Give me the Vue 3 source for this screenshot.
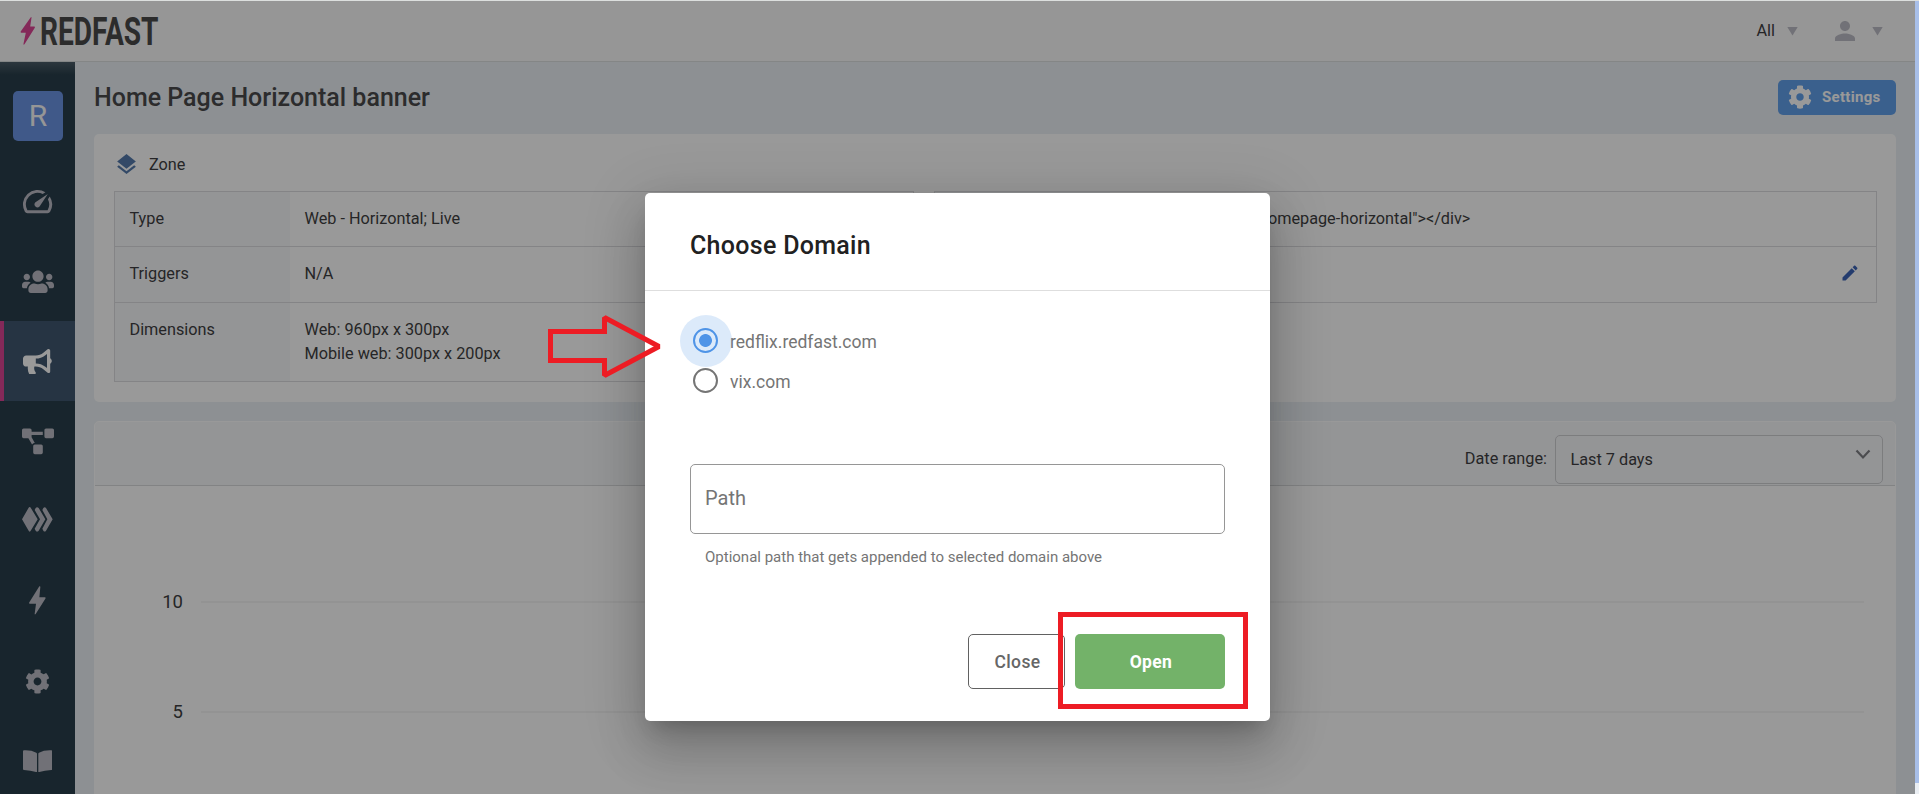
<script setup>
// App.vue — zone detail page with the "Choose Domain" dialog open.

import { ref } from "vue";

const COG =
  "M487.4 315.7l-42.6-24.6c4.3-23.2 4.3-47 0-70.2l42.6-24.6c4.9-2.8 7.1-8.6 5.5-14-11.1-35.6-30-67.8-54.7-94.6-3.8-4.1-10-5.1-14.8-2.3L380.8 110c-17.9-15.4-38.5-27.3-60.8-35.1V25.8c0-5.6-3.9-10.5-9.4-11.7-36.7-8.2-74.3-7.8-109.2 0-5.5 1.2-9.4 6.1-9.4 11.7V75c-22.2 7.9-42.8 19.8-60.8 35.1L88.7 85.5c-4.9-2.8-11-1.9-14.8 2.3-24.7 26.7-43.6 58.9-54.7 94.6-1.7 5.4.6 11.2 5.5 14L67.3 221c-4.3 23.2-4.3 47 0 70.2l-42.6 24.6c-4.9 2.8-7.1 8.6-5.5 14 11.1 35.6 30 67.8 54.7 94.6 3.8 4.1 10 5.1 14.8 2.3l42.6-24.6c17.9 15.4 38.5 27.3 60.8 35.1v49.2c0 5.6 3.9 10.5 9.4 11.7 36.7 8.2 74.3 7.8 109.2 0 5.5-1.2 9.4-6.1 9.4-11.7v-49.2c22.2-7.9 42.8-19.8 60.8-35.1l42.6 24.6c4.9 2.8 11 1.9 14.8-2.3 24.7-26.7 43.6-58.9 54.7-94.6 1.5-5.5-.7-11.3-5.6-14.1zM256 336c-44.1 0-80-35.9-80-80s35.9-80 80-80 80 35.9 80 80-35.9 80-80 80z";

const navItems = [
  {
    key: "dashboard",
    viewBox: "0 0 24 24",
    width: 35,
    height: 35,
    path: "M20.38 8.57l-1.23 1.85a8 8 0 0 1-.22 7.58H5.07A8 8 0 0 1 15.58 6.85l1.85-1.23A10 10 0 0 0 3.35 19a2 2 0 0 0 1.72 1h13.85a2 2 0 0 0 1.74-1 10 10 0 0 0-.27-10.44zM10.59 15.41a2 2 0 0 0 2.83 0l5.66-8.49-8.49 5.66a2 2 0 0 0 0 2.83z",
  },
  {
    key: "audience",
    viewBox: "0 -20 640 512",
    width: 32,
    height: 25.6,
    path: "M96 224c35.3 0 64-28.7 64-64s-28.7-64-64-64-64 28.7-64 64 28.7 64 64 64zm448 0c35.3 0 64-28.7 64-64s-28.7-64-64-64-64 28.7-64 64 28.7 64 64 64zm32 32h-64c-17.6 0-33.5 7.1-45.1 18.6 40.3 22.1 68.9 62 75.1 109.4h66c17.7 0 32-14.3 32-32v-32c0-35.3-28.7-64-64-64zm-256 0c61.9 0 112-50.1 112-112S381.9 32 320 32 208 82.1 208 144s50.1 112 112 112zm76.8 32h-8.3c-20.8 10-43.9 16-68.5 16s-47.6-6-68.5-16h-8.3C179.6 288 128 339.6 128 403.2V432c0 26.5 21.5 48 48 48h288c26.5 0 48-21.5 48-48v-28.8c0-63.6-51.6-115.2-115.2-115.2zm-223.7-13.4C161.5 263.1 145.6 256 128 256H64c-35.3 0-64 28.7-64 64v32c0 17.7 14.3 32 32 32h65.9c6.3-47.4 34.9-87.3 75.2-109.4z",
  },
  {
    key: "prompts",
    active: true,
    viewBox: "0 -20 576 532",
    width: 28.8,
    height: 26.6,
    path: "M576 240c0-23.63-12.95-44.04-32-55.12V32.01C544 23.26 537.02 0 512 0c-7.12 0-14.19 2.38-19.98 7.02l-85.03 68.03C364.28 109.19 310.66 128 256 128H64c-35.35 0-64 28.65-64 64v96c0 35.35 28.65 64 64 64h33.7c-1.39 10.48-2.18 21.14-2.18 32 0 39.77 9.26 77.35 25.56 110.94 5.19 10.69 16.52 17.06 28.4 17.06h74.28c26.05 0 41.69-29.84 25.9-50.56-16.4-21.52-26.15-48.36-26.15-77.44 0-11.11 1.62-21.79 4.41-32H256c54.66 0 108.28 18.81 150.98 52.95l85.03 68.03a32.023 32.023 0 0 0 19.98 7.02c24.92 0 32-22.78 32-32V295.13C563.05 284.04 576 263.63 576 240zm-96 141.42l-33.05-26.44C392.95 311.78 325.12 288 256 288v-96c69.12 0 136.95-23.78 190.95-66.98L480 98.58v282.84z",
  },
  {
    key: "flows",
    viewBox: "0 -32 640 544",
    width: 32,
    height: 27.2,
    path: "M384 320H256c-17.67 0-32 14.33-32 32v128c0 17.67 14.33 32 32 32h128c17.67 0 32-14.33 32-32V352c0-17.67-14.33-32-32-32zM192 32c0-17.67-14.33-32-32-32H32C14.33 0 0 14.33 0 32v128c0 17.67 14.33 32 32 32h95.72l73.16 128.04C211.98 300.98 232.4 288 256 288h.28L192 175.51V128h224V64H192V32zM608 0H480c-17.67 0-32 14.33-32 32v128c0 17.67 14.33 32 32 32h128c17.67 0 32-14.33 32-32V32c0-17.67-14.33-32-32-32z",
  },
  {
    key: "journeys",
    viewBox: "0 0 92 84",
    width: 30.7,
    height: 28,
    path: "M23 0q2 0 4 4l20 33-20 33q-2 4-4 4t-4-4L0 37 19 4q2-4 4-4zM38 9l3-6q4-5 9 0l20 34-20 34q-5 5-9 0l-3-6 16-28zM61 9l3-6q4-5 8 0l20 34-20 34q-4 5-8 0l-3-6 15-28z",
  },
  {
    key: "triggers",
    viewBox: "0 0 50 90",
    width: 16.7,
    height: 30,
    path: "M31 1q3-1 3 2l-3 31h17q3 1 1 4L20 84q-3 3-3-1l4-30H2q-3-1-1-4z",
  },
  { key: "settings", viewBox: "0 0 512 512", width: 25, height: 25, path: COG },
  {
    key: "docs",
    viewBox: "0 0 88 68",
    width: 29.3,
    height: 22.7,
    path: "M3 1q22-1 37 7 2 1 2 3v56q-17-6-39-7-3 0-3-3V4q0-3 3-3zM85 1q-22-1-37 7-2 1-2 3v56q17-6 39-7 3 0 3-3V4q0-3-3-3z",
  },
];

const zoneRows = [
  { label: "Type", lines: ["Web - Horizontal; Live"] },
  { label: "Triggers", lines: ["N/A"] },
  { label: "Dimensions", lines: ["Web: 960px x 300px", "Mobile web: 300px x 200px"] },
];

const tagRows = [
  { label: "Tag", text: '<div data-zone-id="homepage-horizontal"></div>' },
  { label: "Notes", text: "", editable: true },
];

const ticks = [10, 5];

const domains = ["redflix.redfast.com", "vix.com"];
const selected = ref(domains[0]);
</script>

<template>
  <div class="app">
    <header class="topbar">
      <svg class="logo" width="220" height="60" viewBox="0 -15 220 60">
        <path d="M10.6 1.4q1-1 .9.4L10.2 10.5h4.2q1 .2.4 1.2L4.5 28.3q-1.2 1-1-.6l2.3-10.9H1.2q-1-.2-.5-1.2z" fill="#dd4594" />
        <text x="20" y="29" textLength="118.5" lengthAdjust="spacingAndGlyphs">REDFAST</text>
      </svg>
      <div class="topbar-right">
        <span class="account">All</span>
        <span class="caret" />
        <svg class="user" width="30" height="30" viewBox="0 0 24 24">
          <path d="M12 12c2.21 0 4-1.79 4-4s-1.79-4-4-4-4 1.79-4 4 1.79 4 4 4zm0 2c-2.67 0-8 1.34-8 4v2h16v-2c0-2.66-5.33-4-8-4z" />
        </svg>
        <span class="caret" />
      </div>
    </header>

    <div class="body">
      <nav class="sidebar">
        <div class="tile">R</div>
        <a v-for="item in navItems" :key="item.key" class="nav-item" :class="{ active: item.active }">
          <svg :width="item.width" :height="item.height" :viewBox="item.viewBox">
            <path :d="item.path" />
          </svg>
        </a>
      </nav>

      <main class="main">
        <div class="title-row">
          <h1>Home Page Horizontal banner</h1>
          <button class="settings">
            <svg width="24" height="24" viewBox="0 0 512 512"><path :d="COG" /></svg>
            <span>Settings</span>
          </button>
        </div>

        <section class="card zone">
          <div class="zone-head">
            <svg width="25" height="25" viewBox="0 0 24 24">
              <path d="M11.99 18.54l-7.37-5.73L3 14.07l9 7 9-7-1.63-1.27-7.38 5.74zM12 16l7.36-5.73L21 9l-9-7-9 7 1.63 1.27L12 16z" />
            </svg>
            <span>Zone</span>
          </div>
          <div class="tables">
            <div class="table left">
              <div v-for="row in zoneRows" :key="row.label" class="row">
                <div class="label">{{ row.label }}</div>
                <div class="value">
                  <div v-for="line in row.lines" :key="line">{{ line }}</div>
                </div>
              </div>
            </div>
            <div class="table right">
              <div v-for="row in tagRows" :key="row.label" class="row">
                <div class="label">{{ row.label }}</div>
                <div class="value">{{ row.text }}</div>
                <svg v-if="row.editable" class="edit" width="20" height="20" viewBox="0 0 24 24">
                  <path d="M3 17.25V21h3.75L17.81 9.94l-3.75-3.75L3 17.25zM20.71 7.04c.39-.39.39-1.02 0-1.41l-2.34-2.34c-.39-.39-1.02-.39-1.41 0l-1.83 1.83 3.75 3.75 1.83-1.83z" />
                </svg>
              </div>
            </div>
          </div>
        </section>

        <section class="card chart">
          <div class="chart-head">
            <span class="range-label">Date range:</span>
            <div class="select">
              <span>Last 7 days</span>
              <svg width="16" height="11" viewBox="0 0 16 11">
                <path d="M1.5 1.5L8 8.5l6.5-7" fill="none" stroke="#7e7f84" stroke-width="2.2" />
              </svg>
            </div>
          </div>
          <div class="plot">
            <div v-for="tick in ticks" :key="tick" class="tick">
              <span>{{ tick }}</span>
              <i />
            </div>
          </div>
        </section>
      </main>
    </div>

    <!-- Dialog -->
    <div class="backdrop">
      <div class="dialog">
        <h2>Choose Domain</h2>
        <div class="dialog-body">
          <label v-for="domain in domains" :key="domain" class="radio" :class="{ checked: domain === selected }" @click="selected = domain">
            <span class="ring" />
            <span class="radio-text">{{ domain }}</span>
          </label>
          <div class="field">Path</div>
          <p class="hint">Optional path that gets appended to selected domain above</p>
        </div>
        <div class="actions">
          <button class="btn close">Close</button>
          <button class="btn open">Open</button>
        </div>
      </div>
    </div>

    <!-- Page edges -->
    <div class="edge-top" />
    <div class="edge-right" />

    <!-- Callouts -->
    <svg class="arrow" width="118" height="70" viewBox="0 0 118 70">
      <path d="M5.5 18.5H59.5V4.5l54.5 29L59.5 62.5V47.5H5.5z" />
    </svg>
    <div class="highlight" />
  </div>
</template>

<style>
body {
  margin: 0;
  overflow: hidden;
}
</style>

<style scoped>
.app {
  position: relative;
  display: flex;
  flex-direction: column;
  height: 100vh;
  overflow: hidden;
  box-sizing: border-box;
  font-family: Roboto, "Liberation Sans", sans-serif;
  font-size: 16.25px;
  color: #3f3f42;
  background: #ebf1f5;
}

.app *,
.app *::before {
  box-sizing: border-box;
}

h1,
h2,
p {
  margin: 0;
}

button {
  font-family: inherit;
}

/* Top bar */
.topbar {
  flex: none;
  display: flex;
  align-items: center;
  justify-content: space-between;
  height: 62px;
  padding: 1px 36px 0 20px;
  background: #fafafa;
  border-bottom: 1px solid #dcdfdf;
}

.logo text {
  font-family: Roboto, sans-serif;
  font-size: 39.5px;
  font-weight: 700;
  fill: #4a4a4a;
}

.topbar-right {
  display: flex;
  align-items: center;
}

.account {
  margin-right: 12px;
  padding-bottom: 2px;
}

.caret {
  width: 11px;
  height: 9px;
  background: #bdbdc6;
  clip-path: polygon(0 0, 100% 0, 50% 100%);
}

.user {
  margin: 0 12px 0 32px;
  fill: #bdbdc6;
}

.body {
  flex: 1;
  display: flex;
  min-height: 0;
}

/* Sidebar */
.sidebar {
  flex: none;
  width: 75px;
  padding-top: 29px;
  background: linear-gradient(#4b5c67, #283e4b 13px);
}

.tile {
  width: 50px;
  height: 50px;
  margin: 0 auto 20px 13px;
  border-radius: 5px;
  background: #6c94e4;
  color: #fafafa;
  font-size: 30px;
  line-height: 49px;
  text-align: center;
}

.nav-item {
  display: flex;
  align-items: center;
  justify-content: center;
  height: 80px;
}

.nav-item svg {
  fill: #bdbdc6;
}

.nav-item.active {
  padding-right: 4px;
  border-left: 4px solid #dd4594;
  background: #405871;
}

.nav-item.active svg {
  fill: #fff;
}

/* Main column */
.main {
  flex: 1;
  min-width: 0;
  padding: 18px 23px 0 19px;
}

.title-row {
  display: flex;
  align-items: flex-start;
  justify-content: space-between;
  height: 54px;
}

h1 {
  font-size: 25px;
  font-weight: 500;
  line-height: 35px;
  color: #4a4a4c;
}

.settings {
  display: flex;
  align-items: center;
  gap: 10px;
  width: 118px;
  height: 35px;
  padding: 0 0 1px 10px;
  border: 0;
  border-radius: 5px;
  background: #62a0eb;
  color: #fff;
  font-size: 15px;
  font-weight: 700;
  letter-spacing: 0.3px;
}

.settings svg {
  fill: #fff;
}

.card {
  border-radius: 5px;
  background: #fff;
}

.zone {
  height: 268px;
  padding: 18px 19px 0 20px;
}

.zone-head {
  display: flex;
  align-items: center;
  gap: 10px;
  height: 25px;
}

.zone-head svg {
  fill: #557bac;
}

.tables {
  display: flex;
  align-items: flex-start;
  gap: 20px;
  margin-top: 14px;
}

.table {
  border: 1px solid #dcdddf;
}

.left {
  width: 800px;
}

.right {
  flex: 1;
}

.row {
  display: flex;
  height: 54px;
  line-height: 24px;
}

.row + .row {
  height: 56px;
  border-top: 1px solid #dcdddf;
}

.left .row:last-child {
  height: 79px;
}

.label {
  flex: none;
  width: 175px;
  padding: 15px 14.5px;
  background: #f7f8fb;
}

.value {
  flex: 1;
  padding: 15px 14.5px;
}

.right .value {
  padding-left: 12.5px;
}

.edit {
  align-self: center;
  margin: 0 16px 3px 0;
  fill: #3d64b8;
}

/* Chart card */
.chart {
  height: 420px;
  margin-top: 19px;
  border: 1px solid #fff;
}

.chart-head {
  display: flex;
  align-items: flex-start;
  justify-content: flex-end;
  height: 64px;
  padding: 13px 12px 0 0;
  border-radius: 4px 4px 0 0;
  border-bottom: 1px solid #d9dadd;
  background: #f7f8fb;
}

.range-label {
  margin-right: 8px;
  line-height: 47px;
}

.select {
  display: flex;
  justify-content: space-between;
  width: 328px;
  height: 49px;
  padding: 0 11px 0 14.5px;
  border: 1px solid #cfd0d3;
  border-radius: 5px;
  line-height: 48px;
}

.select svg {
  margin-top: 13px;
}

.plot {
  padding: 61px 31px 0 63px;
}

.tick {
  display: flex;
  align-items: flex-start;
  height: 110px;
  line-height: 110px;
}

.tick span {
  width: 25px;
  margin-right: 18px;
  font-size: 18.5px;
  text-align: right;
}

.tick i {
  flex: 1;
  height: 2px;
  margin-top: 54px;
  background: #f5f5f5;
}

/* Dialog */
.backdrop {
  position: absolute;
  inset: 0;
  display: flex;
  align-items: flex-start;
  justify-content: center;
  padding: 193px 4px 0 0;
  background: rgba(0, 0, 0, 0.4);
}

.dialog {
  display: flex;
  flex-direction: column;
  width: 625px;
  height: 528px;
  border-radius: 5px;
  background: #fff;
  box-shadow: 0 14px 19px -9px rgba(0, 0, 0, 0.2), 0 30px 47px 4px rgba(0, 0, 0, 0.14), 0 11px 57px 10px rgba(0, 0, 0, 0.12);
}

h2 {
  height: 98px;
  padding-left: 45px;
  border-bottom: 1px solid #dedede;
  font-size: 25px;
  font-weight: 500;
  letter-spacing: 0.3px;
  line-height: 105px;
  color: #212121;
}

.dialog-body {
  flex: 1;
  padding: 29px 45px 0;
}

.radio {
  display: flex;
  align-items: center;
  gap: 12px;
  height: 40px;
  padding-left: 3px;
  color: #757575;
  font-size: 17.5px;
}

.radio-text {
  padding-top: 3px;
}

.ring {
  position: relative;
  width: 25px;
  height: 25px;
  border: 2px solid #757575;
  border-radius: 50%;
}

.checked .ring {
  border-color: #4f94e8;
  background: radial-gradient(circle, #4f94e8 6px, transparent 6.8px);
}

/* Focus ripple behind the checked radio */
.checked .ring::before {
  content: "";
  position: absolute;
  inset: -15px -16px -16px -15px;
  border-radius: 50%;
  background: rgba(79, 148, 232, 0.2);
}

.field {
  height: 70px;
  margin-top: 64px;
  padding-left: 14px;
  border: 1px solid #969696;
  border-radius: 5px;
  color: #757575;
  font-size: 20px;
  line-height: 66px;
}

.hint {
  padding: 14px 15px 0;
  color: #757575;
  font-size: 15px;
  line-height: 18px;
}

.actions {
  display: flex;
  justify-content: flex-end;
  gap: 10px;
  padding: 0 45px 32px;
}

.btn {
  height: 55px;
  padding: 0 0 0 2px;
  border-radius: 5px;
  font-size: 17.5px;
  font-weight: 500;
  letter-spacing: 0.35px;
}

.close {
  width: 97px;
  border: 1px solid #616161;
  background: #fff;
  color: #666;
}

.open {
  width: 150px;
  border: 0;
  background: #73b269;
  color: #fff;
  font-weight: 700;
}

.edge-top {
  position: absolute;
  inset: 0 0 auto 0;
  height: 1px;
  background: #dcdfde;
}

/* Scrollbar thumb over its track */
.edge-right {
  position: absolute;
  inset: 1px 0 0 auto;
  width: 4px;
  background: linear-gradient(#a8bfe9 782px, #eaeef3 782px);
}

.arrow {
  position: absolute;
  left: 545px;
  top: 313px;
}

.arrow path {
  fill: none;
  stroke: #ed1c24;
  stroke-width: 5;
  stroke-miterlimit: 1.5;
}

.highlight {
  position: absolute;
  left: 1058px;
  top: 612px;
  width: 190px;
  height: 97px;
  border: 5px solid #ed1c24;
}
</style>
